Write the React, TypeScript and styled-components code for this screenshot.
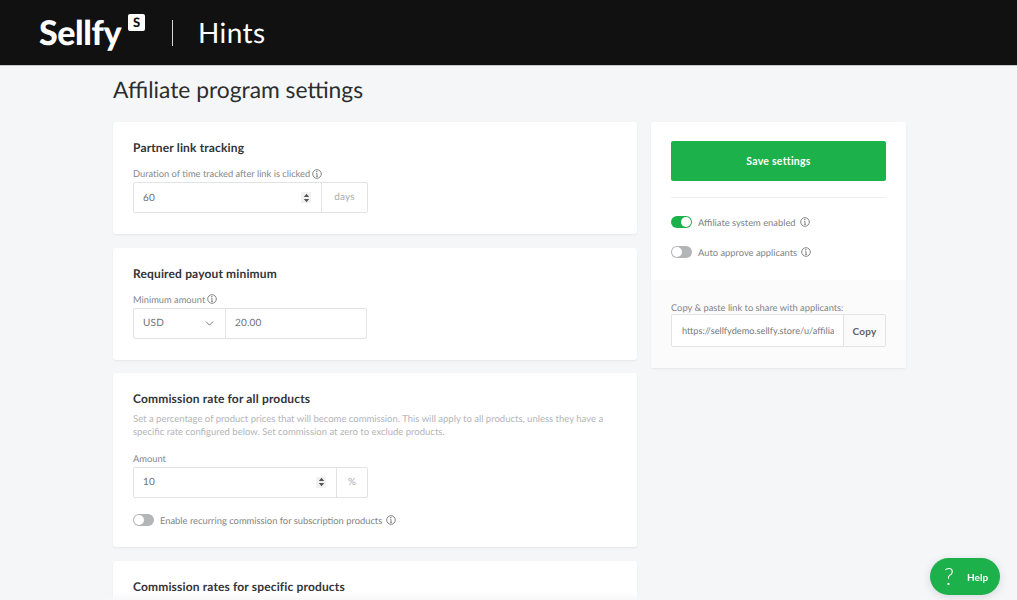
import styled, { createGlobalStyle } from "styled-components";
import { ChevronDown } from "lucide-react";

const GlobalStyle = createGlobalStyle`
    html, body {
        margin: 0;
        height: 600px;
        overflow: hidden;
        background: #f5f6f8;
        font-family: Lato, "Liberation Sans", sans-serif;
        text-rendering: geometricPrecision;
    }
    * { box-sizing: border-box; }
`;

const InfoIcon = () => (
    <svg width="10" height="10" viewBox="0 0 10 10" fill="none" stroke="#666" strokeWidth="0.8">
        <circle cx="5" cy="5" r="4.3" />
        <path d="M5 4.3V7.4M4.2 7.4H5.8M4.3 4.3H5" />
        <circle cx="4.9" cy="2.8" r="0.3" fill="#666" />
    </svg>
);

const Stepper = () => (
    <StepperBox>
        <svg width="7" height="10" viewBox="0 0 7 10" fill="#555">
            <path d="M3.5 0.8L6.2 4H0.8ZM3.5 9.2L0.8 6H6.2Z" />
        </svg>
    </StepperBox>
);

export default function App() {
    return (
        <>
            <GlobalStyle />
            <Header>
                <Logo>
                    Sellfy
                    <LogoBadge>S</LogoBadge>
                </Logo>
                <HeaderDivider />
                <HeaderTitle>Hints</HeaderTitle>
            </Header>
            <Page>
                <PageTitle>Affiliate program settings</PageTitle>
                <Columns>
                    <MainColumn>
                        <Card $height={112}>
                            <CardTitle>Partner link tracking</CardTitle>
                            <FieldLabel>
                                <span>Duration of time tracked after link is clicked</span>
                                <InfoIcon />
                            </FieldLabel>
                            <FieldGroup $width={235}>
                                <FieldCell $grow>
                                    <span>60</span>
                                    <Stepper />
                                </FieldCell>
                                <Suffix $width={46}>days</Suffix>
                            </FieldGroup>
                        </Card>
                        <Card $height={112}>
                            <CardTitle>Required payout minimum</CardTitle>
                            <FieldLabel>
                                <span>Minimum amount</span>
                                <InfoIcon />
                            </FieldLabel>
                            <FieldGroup $width={234}>
                                <FieldCell $width={91}>
                                    <span>USD</span>
                                    <ChevronDown size={13} color="#666" strokeWidth={1.6} />
                                </FieldCell>
                                <FieldCell $grow>
                                    <span>20.00</span>
                                </FieldCell>
                            </FieldGroup>
                        </Card>
                        <Card $height={174}>
                            <CardTitle>Commission rate for all products</CardTitle>
                            <Description>
                                Set a percentage of product prices that will become commission. This will apply to all products, unless they have a specific rate configured below. Set commission at zero to exclude products.
                            </Description>
                            <FieldLabel>Amount</FieldLabel>
                            <FieldGroup $width={235}>
                                <FieldCell $grow>
                                    <span>10</span>
                                    <Stepper />
                                </FieldCell>
                                <Suffix $width={31}>%</Suffix>
                            </FieldGroup>
                            <ToggleRow $top={16}>
                                <Toggle />
                                <ToggleText>Enable recurring commission for subscription products</ToggleText>
                                <InfoIcon />
                            </ToggleRow>
                        </Card>
                        <Card $height={120}>
                            <CardTitle>Commission rates for specific products</CardTitle>
                        </Card>
                    </MainColumn>
                    <SideCard>
                        <SideTop>
                            <SaveButton>Save settings</SaveButton>
                            <SideDivider />
                            <ToggleRow $top={0}>
                                <Toggle $on />
                                <ToggleText>Affiliate system enabled</ToggleText>
                                <InfoIcon />
                            </ToggleRow>
                            <ToggleRow $top={17}>
                                <Toggle />
                                <ToggleText>Auto approve applicants</ToggleText>
                                <InfoIcon />
                            </ToggleRow>
                        </SideTop>
                        <SideBottom>
                            <ShareLabel>Copy &amp; paste link to share with applicants:</ShareLabel>
                            <FieldGroup $width={215} $height={33}>
                                <UrlCell>https://sellfydemo.sellfy.store/u/affiliate</UrlCell>
                                <CopyButton>Copy</CopyButton>
                            </FieldGroup>
                        </SideBottom>
                    </SideCard>
                </Columns>
            </Page>
            <BottomFade />
            <HelpButton>
                <HelpGlyph>?</HelpGlyph>
                Help
            </HelpButton>
        </>
    );
}

const Header = styled.header`
    display: flex;
    align-items: center;
    height: 66px;
    padding-left: 39px;
    background: #111112;
    border-bottom: 1px solid #c9cbce;
`;

const Logo = styled.div`
    position: relative;
    width: 106px;
    color: #fff;
    font-size: 34px;
    font-weight: 900;
    letter-spacing: -0.4px;
    line-height: 36px;
`;

const LogoBadge = styled.span`
    position: absolute;
    top: -1px;
    left: 89px;
    width: 17px;
    height: 17px;
    border-radius: 2px;
    background: #fff;
    color: #111112;
    font-size: 13px;
    font-weight: 900;
    letter-spacing: 0;
    line-height: 17px;
    text-align: center;
`;

const HeaderDivider = styled.div`
    width: 1px;
    height: 26px;
    margin-left: 27px;
    background: #d8d8d8;
`;

const HeaderTitle = styled.div`
    margin: -2px 0 0 25px;
    color: #fff;
    font-size: 28px;
    font-weight: 400;
    letter-spacing: 0.4px;
`;

const Page = styled.main`
    width: 793px;
    margin-left: 113px;
`;

const PageTitle = styled.h1`
    height: 56px;
    margin: 0;
    padding-top: 8px;
    color: #2c2d2f;
    font-size: 22.8px;
    font-weight: 400;
    line-height: 30px;
`;

const Columns = styled.div`
    display: flex;
    align-items: flex-start;
    gap: 14px;
`;

const MainColumn = styled.div`
    display: flex;
    flex-direction: column;
    gap: 13.5px;
    width: 524px;
`;

const Card = styled.section<{ $height: number }>`
    height: ${(p) => p.$height}px;
    padding: 18px 20px 0;
    border-radius: 3px;
    background: #fff;
    box-shadow: 0 1px 2px rgba(40, 50, 70, 0.08);
`;

const CardTitle = styled.h2`
    margin: 0 0 12px;
    color: #333437;
    font-size: 12px;
    font-weight: 700;
    line-height: 16px;
    letter-spacing: 0.15px;
`;

const Description = styled.p`
    width: 480px;
    margin: -6px 0 13.5px;
    color: #b3b5b8;
    font-size: 9.5px;
    line-height: 13px;
`;

const FieldLabel = styled.div`
    display: flex;
    align-items: center;
    gap: 2px;
    height: 11px;
    margin-bottom: 3px;
    color: #85878a;
    font-size: 9.3px;
`;

const FieldGroup = styled.div<{ $width: number; $height?: number }>`
    display: flex;
    width: ${(p) => p.$width}px;
    height: ${(p) => p.$height ?? 31}px;
    border: 1px solid #e2e3e5;
    border-radius: 2px;
    background: #fff;
`;

const FieldCell = styled.div<{ $grow?: boolean; $width?: number }>`
    display: flex;
    align-items: center;
    justify-content: space-between;
    flex: ${(p) => (p.$grow ? 1 : "none")};
    width: ${(p) => (p.$width ? `${p.$width}px` : "auto")};
    padding: 0 9px;
    color: #6f7174;
    font-size: 10px;
    letter-spacing: 0.2px;
    & + & {
        border-left: 1px solid #e2e3e5;
    }
`;

const StepperBox = styled.span`
    display: flex;
    align-items: center;
    justify-content: center;
    width: 10px;
    height: 11px;
    margin-right: 1px;
    background: #f1f1f2;
`;

const Suffix = styled.div<{ $width: number }>`
    flex: none;
    width: ${(p) => p.$width}px;
    border-left: 1px solid #e2e3e5;
    color: #a9abae;
    font-size: 10px;
    line-height: 29px;
    letter-spacing: 0.2px;
    text-align: center;
`;

const ToggleRow = styled.div<{ $top: number }>`
    display: flex;
    align-items: center;
    gap: 4px;
    height: 13px;
    margin-top: ${(p) => p.$top}px;
    color: #818386;
    font-size: 9.35px;
`;

const ToggleText = styled.span`
    padding-top: 1px;
`;

const Toggle = styled.span<{ $on?: boolean }>`
    position: relative;
    flex: none;
    width: 21px;
    height: 12px;
    margin-right: 2px;
    border-radius: 6px;
    background: ${(p) => (p.$on ? "#1db14b" : "#b3b5b7")};
    &::after {
        content: "";
        position: absolute;
        top: 1px;
        left: ${(p) => (p.$on ? "10px" : "1px")};
        width: 10px;
        height: 10px;
        border-radius: 50%;
        background: #fff;
    }
`;

const SideCard = styled.aside`
    width: 255px;
    height: 246px;
    border-radius: 3px;
    background: #fff;
    box-shadow: 0 1px 2px rgba(40, 50, 70, 0.08);
`;

const SideTop = styled.div`
    height: 158px;
    padding: 19px 20px 0;
`;

const SaveButton = styled.button`
    display: block;
    width: 215px;
    height: 40px;
    border: 0;
    border-radius: 2px;
    background: #1db14b;
    color: #fff;
    font-family: inherit;
    font-size: 10.5px;
    font-weight: 700;
    letter-spacing: 0.25px;
`;

const SideDivider = styled.div`
    height: 1px;
    margin: 16px 0 17px;
    background: #efefef;
`;

const SideBottom = styled.div`
    height: 88px;
    padding: 21px 20px 0;
    background: #fbfbfc;
`;

const ShareLabel = styled.div`
    height: 13px;
    color: #828487;
    font-size: 9.3px;
    line-height: 13px;
`;

const UrlCell = styled.div`
    flex: 1;
    min-width: 0;
    margin: 0 9px 0 10px;
    overflow: hidden;
    color: #75777a;
    font-size: 9.2px;
    line-height: 31px;
    white-space: nowrap;
`;

const CopyButton = styled.button`
    flex: none;
    width: 42px;
    padding: 0;
    border: 0;
    border-left: 1px solid #e2e3e5;
    background: #fbfbfb;
    color: #5f6164;
    font-family: inherit;
    font-size: 10px;
    font-weight: 700;
    letter-spacing: 0.2px;
`;

const BottomFade = styled.div`
    position: fixed;
    left: 0;
    right: 0;
    bottom: 0;
    height: 8px;
    background: linear-gradient(rgba(255, 255, 255, 0), rgba(245, 246, 248, 0.8));
`;

const HelpButton = styled.button`
    position: fixed;
    left: 930px;
    top: 558px;
    display: flex;
    align-items: center;
    gap: 13px;
    width: 70px;
    height: 37px;
    padding: 0 0 0 14px;
    border: 0;
    border-radius: 19px;
    background: #1db14b;
    box-shadow: 0 2px 8px rgba(40, 50, 70, 0.15);
    color: #fff;
    font-family: inherit;
    font-size: 10px;
    font-weight: 700;
`;

const HelpGlyph = styled.span`
    width: 10px;
    font-size: 23px;
    font-weight: 300;
    line-height: 23px;
`;
